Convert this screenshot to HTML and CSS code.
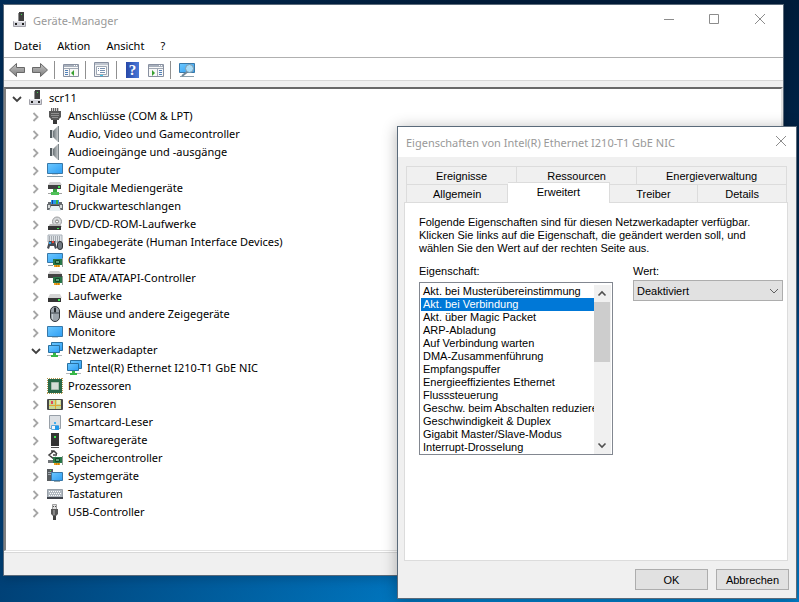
FILE: index.html
```
<!DOCTYPE html>
<html lang="de">
<head>
  <meta charset="UTF-8">
  <meta name="viewport" content="width=device-width, initial-scale=1.0">
  <title>Geräte-Manager</title>
  <link rel="stylesheet" href="styles.css">
</head>
<body>
  <!-- Icon sprites -->
  <svg class="sprites" aria-hidden="true">
    <defs>
      <linearGradient id="screen" x1="0" y1="0" x2="1" y2="1">
        <stop offset="0" stop-color="#6cc8ff"/>
        <stop offset="1" stop-color="#2e9ef4"/>
      </linearGradient>
      <linearGradient id="metal" x1="0" y1="0" x2="1" y2="0">
        <stop offset="0" stop-color="#6c7478"/>
        <stop offset="1" stop-color="#d4d8da"/>
      </linearGradient>
      <linearGradient id="arrow" x1="0" y1="0" x2="0" y2="1">
        <stop offset="0" stop-color="#c4c4c4"/>
        <stop offset="1" stop-color="#7c7c7c"/>
      </linearGradient>
    </defs>
    <symbol id="i-host" viewBox="0 0 16 16">
      <path d="M7 0h5v9H7z" fill="#404040"/><path d="M6 1h1v8H6z" fill="#909090"/><path d="M9 2h1v1H9z" fill="#40d850"/>
      <path d="M1.500 9.500h12v5h-12z" fill="#d4d5dc" stroke="#a0a0a8"/><path d="M2 9h11v1H2z" fill="#f0f0f4"/>
      <path d="M3 11h2v2H3zM10 11h2v2h-2z" fill="#202020"/>
    </symbol>
    <symbol id="i-port" viewBox="0 0 16 16">
      <path d="M4 0h8v4H4z" fill="#d0d0d0"/><path d="M4.500 0v4M6.500 0v4M8.500 0v4M10.500 0v4" stroke="#606060"/>
      <path d="M2 3h12v6l-2 2v1H4v-1l-2-2z" fill="#585858"/><path d="M4 5.500h8M4 7.500h8M5 9.500h6" stroke="#909090"/>
      <path d="M6 12h4v4H6z" fill="#383838"/>
    </symbol>
    <symbol id="i-speaker" viewBox="0 0 16 16">
      <path d="M3 4h3v8H3z" fill="#545c60"/><path d="M6 5l5-5h1v16h-1l-5-5z" fill="url(#metal)"/>
      <path d="M5.500 4v8" stroke="#c8ccce"/><path d="M11.500 0v16" stroke="#7c8488"/>
    </symbol>
    <symbol id="i-computer" viewBox="0 0 16 16">
      <path d="M.5 1.500h15v10H.5z" fill="url(#screen)" stroke="#3878a8"/>
      <path d="M5 12h6v1H5z" fill="#d0d8dc"/><path d="M0 14h16v1H0z" fill="#8ca0ac"/>
    </symbol>
    <symbol id="i-media" viewBox="0 0 16 16">
      <path d="M3 2h10l2 3H1z" fill="#d0d0d0"/><path d="M1 5h13v4H1z" fill="#404040"/><path d="M11 6h2v2h-2z" fill="#40e850"/>
      <path d="M6 9h4v4H6z" fill="#38a840"/><path d="M4 12h8v3H4z" fill="#50c058"/><path d="M1 13h3v1H1zM12 13h3v1h-3z" fill="#a0a0a0"/>
    </symbol>
    <symbol id="i-printer" viewBox="0 0 16 16">
      <path d="M4 2h8v5H4z" fill="#2898e8"/><path d="M9 2h2v4H9z" fill="#38b040"/><path d="M5 2h1v4H5z" fill="#183c9c"/>
      <path d="M1 4h3v2h8V4h3v2h1v6H0V6h1z" fill="#686c70"/>
      <path d="M1 7h2v3H1zM13 7h2v3h-2z" fill="#d8dcdc"/><path d="M4 8h8l2 5H2z" fill="#e8eff2"/><path d="M4 7.500h8" stroke="#404448"/>
    </symbol>
    <symbol id="i-disc" viewBox="0 0 16 16">
      <circle cx="10" cy="5.500" r="4.500" fill="#d8dadc" stroke="#9a9c9e"/><circle cx="10" cy="5.500" r="1.500" fill="#fff" stroke="#808080"/>
      <path d="M3 8h10l2 3H1z" fill="#b8b8b8"/><path d="M1 10h13v4H1z" fill="#343434"/><path d="M10 12h2v1h-2z" fill="#40e850"/>
    </symbol>
    <symbol id="i-hid" viewBox="0 0 16 16">
      <path d="M1 1h14v7H1z" fill="#e0e4e8" stroke="#a8b0b8"/><path d="M2 3h12M2 5h12M2 7h12" stroke="#687078" stroke-dasharray="1 1"/>
      <path d="M0 14l2-7h6l2 7-2 1-1-3H3l-1 3z" fill="#484c54"/><path d="M2 8h2v2H2z" fill="#30a0e8"/><path d="M5 7h2v2H5z" fill="#e84838"/>
      <rect x="10.500" y="7.500" width="5" height="8" rx="2.500" fill="#707880" stroke="#303438"/>
    </symbol>
    <symbol id="i-board" viewBox="0 0 16 16">
      <path d="M6 7h9v6H6z" fill="#287848"/><path d="M15.500 6v9" stroke="#909c94"/><path d="M8.500 8.500h4v3h-4z" fill="#60a078" stroke="#104828"/>
      <path d="M7 13h6v2H7z" fill="#f0a020"/><path d="M9.500 13v2M11.500 13v2" stroke="#c88010"/>
    </symbol>
    <symbol id="i-gpu" viewBox="0 0 16 16">
      <path d="M.5 1.500h15v9H.5z" fill="url(#screen)" stroke="#3878a8"/><path d="M1 13h5v1H1z" fill="#909ca4"/>
      <use href="#i-board"/>
    </symbol>
    <symbol id="i-ide" viewBox="0 0 16 16">
      <path d="M3 1h9l3 3H1z" fill="#d0d0d0"/><path d="M1 4h14v4H1z" fill="#444"/><use href="#i-board"/>
    </symbol>
    <symbol id="i-drive" viewBox="0 0 16 16">
      <path d="M3 6h10l2 4H1z" fill="#d4d4d4"/><path d="M1 10h13v4H1z" fill="#343434"/><path d="M11 11h2v2h-2z" fill="#40e850"/>
    </symbol>
    <symbol id="i-mouse" viewBox="0 0 16 16">
      <rect x="3.500" y=".5" width="9" height="15" rx="4.500" fill="#9ca4ac" stroke="#303438"/>
      <path d="M5 8h1v5H5z" fill="#c8d0d4"/><path d="M8 1v6M4 7h8" stroke="#404850"/><path d="M7 2h2v4H7z" fill="#282c30"/>
    </symbol>
    <symbol id="i-monitor" viewBox="0 0 16 16">
      <path d="M.5 2.500h15v10H.5z" fill="url(#screen)" stroke="#3878a8"/><path d="M5 13h6v1H5z" fill="#c4ccd0"/>
    </symbol>
    <symbol id="i-net" viewBox="0 0 16 16">
      <path d="M4.500.5h11v8h-11z" fill="url(#screen)" stroke="#2870a0"/><path d="M1.500 3.500h11v7h-11z" fill="url(#screen)" stroke="#2870a0"/>
      <path d="M0 13h15v1H0z" fill="#b4b8bc"/><path d="M6 11h3v2h2v2H4v-2h2z" fill="#38b848"/>
    </symbol>
    <symbol id="i-cpu" viewBox="0 0 16 16">
      <path d="M0 .5h16M0 15.500h16M.5 0v16M15.500 0v16" stroke="#b89850" stroke-dasharray="1 1"/>
      <path d="M1 1h14v14H1z" fill="#286848"/><path d="M4.500 4.500h7v7h-7z" fill="#d4dcd8" stroke="#a8bcb0"/>
    </symbol>
    <symbol id="i-sensor" viewBox="0 0 16 16">
      <rect y="3" width="16" height="11" rx="1" fill="#484848"/><path d="M2 4h12v9H2z" fill="#c8d898"/>
      <path d="M2 9.500h12M8.500 4v9" stroke="#e0a830"/><path d="M4 5h2v3H4z" fill="#e04858"/><path d="M10 4h3v4h-3z" fill="#e8ecb8"/>
    </symbol>
    <symbol id="i-card" viewBox="0 0 16 16">
      <path d="M2.500 1.500h11v13h-11z" fill="#dce0e4" stroke="#98a0a8"/><path d="M7 8h2v2H7z" fill="#40b0f0"/>
      <path d="M4.500 11.500h7v4h-7z" fill="#f4f8fc" stroke="#60a8d8"/><path d="M8 12h4v4H8z" fill="#2098e8"/>
    </symbol>
    <symbol id="i-software" viewBox="0 0 16 16">
      <path d="M4 1h8v13H4z" fill="#343434"/><path d="M7 4h2v2H7z" fill="#40e850"/><path d="M4 15h8v1H4z" fill="#505050"/>
    </symbol>
    <symbol id="i-storage" viewBox="0 0 16 16">
      <path d="M7 1L2 5l5 4 2-2M4 1h3l3 3M6 5h4" fill="none" stroke="#404040" stroke-width="1.500"/><path d="M1 10h5v3H1z" fill="#707478"/>
      <use href="#i-board"/>
    </symbol>
    <symbol id="i-system" viewBox="0 0 16 16">
      <path d="M0 1h6v12H0z" fill="#585c60"/><path d="M1 4.500h4M1 6.500h3" stroke="#a0a8b0"/><path d="M3 2h1v1H3z" fill="#40e850"/>
      <path d="M4.500 4.500h11v8h-11z" fill="url(#screen)" stroke="#3878a8"/><path d="M7 13h6v1H7z" fill="#98a8b0"/>
    </symbol>
    <symbol id="i-keyboard" viewBox="0 0 16 16">
      <path d="M.5 3.500h15v8H.5z" fill="#b0b8c0" stroke="#98a0a8"/>
      <path d="M2 5.500h12M3 7.500h11M2 9.500h12" stroke="#fff" stroke-dasharray="1 1"/>
      <path d="M0 11h16v2H0z" fill="#40444c"/>
    </symbol>
    <symbol id="i-usb" viewBox="0 0 16 16">
      <path d="M5.500.5h4v5h-4z" fill="#e0e0e0" stroke="#a0a0a0"/><path d="M6 2h1v1H6zM8 2h1v1H8z" fill="#505050"/>
      <path d="M4 5h7v5l-2 2v1H6v-1l-2-2z" fill="#585858"/><path d="M6 6h2v5H6z" fill="#888"/><path d="M6 12h3v4H6z" fill="#404040"/>
    </symbol>
    <symbol id="i-right" viewBox="0 0 16 16"><path d="M5.500 5l4 4-4 4" fill="none" stroke="#a6a6a6" stroke-width="1.800"/></symbol>
    <symbol id="i-down" viewBox="0 0 16 16"><path d="M4 7l4 4 4-4" fill="none" stroke="#404040" stroke-width="1.800"/></symbol>
    <symbol id="i-close" viewBox="0 0 16 16"><path d="M3 2l10 10M13 2L3 12" fill="none" stroke="#8c8c8c" stroke-width="1"/></symbol>
  </svg>

  <main class="desktop">
    <section class="window manager">
      <header class="titlebar">
        <svg class="icon"><use href="#i-host"/></svg>
        <h1>Geräte-Manager</h1>
        <div class="caption">
          <button aria-label="Minimieren"><svg class="icon"><path d="M4 7.500h10" stroke="#8c8c8c"/></svg></button>
          <button aria-label="Maximieren"><svg class="icon"><path d="M3.500 2.500h9v9h-9z" fill="none" stroke="#8c8c8c"/></svg></button>
          <button aria-label="Schließen"><svg class="icon"><use href="#i-close"/></svg></button>
        </div>
      </header>
      <nav class="menubar">
        <button>Datei</button>
        <button>Aktion</button>
        <button>Ansicht</button>
        <button>?</button>
      </nav>
      <div class="toolbar">
        <button aria-label="Zurück"><svg class="icon"><path d="M.5 8l7-6.500v4h8v5h-8v4z" fill="url(#arrow)" stroke="#686868"/></svg></button>
        <button aria-label="Vorwärts"><svg class="icon"><path d="M15.500 8l-7-6.500v4h-8v5h8v4z" fill="url(#arrow)" stroke="#686868"/></svg></button>
        <span class="separator"></span>
        <button aria-label="Konsolenstruktur"><svg class="icon">
          <path d="M.5 2.500h15v12H.5z" fill="#f8f8f8" stroke="#8890a0"/><path d="M1 3h14v2H1z" fill="#a8b0bc"/><path d="M11 3h1v1h-1zM13 3h1v1h-1z" fill="#fff"/><path d="M1 6.500h14M6.500 7v7" stroke="#a0a8b4"/>
          <path d="M2 8.500h3M2 10.500h3M2 12.500h3" stroke="#5080b8"/><path d="M11 8v6l-3-3z" fill="#38a030"/></svg></button>
        <span class="separator"></span>
        <button aria-label="Eigenschaften"><svg class="icon">
          <path d="M.5.500h14v14H.5z" fill="#f0f2f4" stroke="#8890a0"/><path d="M1 1h13v2H1z" fill="#c0c6d0"/><path d="M2.500 4.500h10v8h-10z" fill="#fff" stroke="#a0a8b4"/>
          <path d="M4 6.500h1M6 6.500h5M4 8.500h1M6 8.500h5M6 10.500h5" stroke="#7890b0"/><path d="M6 13h3v1H6z" fill="#38c8f0"/></svg></button>
        <span class="separator"></span>
        <button class="help" aria-label="Hilfe"><b>?</b></button>
        <button aria-label="Aktionsbereich"><svg class="icon">
          <path d="M.5 2.500h15v12H.5z" fill="#f8f8f8" stroke="#8890a0"/><path d="M1 3h14v2H1z" fill="#a8b0bc"/><path d="M11 3h1v1h-1zM13 3h1v1h-1z" fill="#fff"/><path d="M1 6.500h14M9.500 7v7" stroke="#a0a8b4"/>
          <path d="M11 8.500h3M11 10.500h3M11 12.500h3" stroke="#5080b8"/><path d="M4 8v6l3-3z" fill="#38a030"/></svg></button>
        <span class="separator"></span>
        <button aria-label="Nach geänderter Hardware suchen"><svg class="icon">
          <path d="M.5 1.500h15v9H.5z" fill="url(#screen)" stroke="#3878a8"/><path d="M1 14.500h14" stroke="#8ca0ac"/>
          <circle cx="10.500" cy="6.500" r="4" fill="#a8dcf8" stroke="#8098a8"/><path d="M8 10l-5 4" stroke="#708898" stroke-width="2"/></svg></button>
      </div>

      <div class="tree">
        <ul>
          <li>
            <div class="node"><button aria-label="Reduzieren"><svg class="icon"><use href="#i-down"/></svg></button><svg class="icon"><use href="#i-host"/></svg><span>scr11</span></div>
            <ul>
              <li class="node"><button aria-label="Erweitern"><svg class="icon"><use href="#i-right"/></svg></button><svg class="icon"><use href="#i-port"/></svg><span>Anschlüsse (COM &amp; LPT)</span></li>
              <li class="node"><button aria-label="Erweitern"><svg class="icon"><use href="#i-right"/></svg></button><svg class="icon"><use href="#i-speaker"/></svg><span>Audio, Video und Gamecontroller</span></li>
              <li class="node"><button aria-label="Erweitern"><svg class="icon"><use href="#i-right"/></svg></button><svg class="icon"><use href="#i-speaker"/></svg><span>Audioeingänge und -ausgänge</span></li>
              <li class="node"><button aria-label="Erweitern"><svg class="icon"><use href="#i-right"/></svg></button><svg class="icon"><use href="#i-computer"/></svg><span>Computer</span></li>
              <li class="node"><button aria-label="Erweitern"><svg class="icon"><use href="#i-right"/></svg></button><svg class="icon"><use href="#i-media"/></svg><span>Digitale Mediengeräte</span></li>
              <li class="node"><button aria-label="Erweitern"><svg class="icon"><use href="#i-right"/></svg></button><svg class="icon"><use href="#i-printer"/></svg><span>Druckwarteschlangen</span></li>
              <li class="node"><button aria-label="Erweitern"><svg class="icon"><use href="#i-right"/></svg></button><svg class="icon"><use href="#i-disc"/></svg><span>DVD/CD-ROM-Laufwerke</span></li>
              <li class="node"><button aria-label="Erweitern"><svg class="icon"><use href="#i-right"/></svg></button><svg class="icon"><use href="#i-hid"/></svg><span>Eingabegeräte (Human Interface Devices)</span></li>
              <li class="node"><button aria-label="Erweitern"><svg class="icon"><use href="#i-right"/></svg></button><svg class="icon"><use href="#i-gpu"/></svg><span>Grafikkarte</span></li>
              <li class="node"><button aria-label="Erweitern"><svg class="icon"><use href="#i-right"/></svg></button><svg class="icon"><use href="#i-ide"/></svg><span>IDE ATA/ATAPI-Controller</span></li>
              <li class="node"><button aria-label="Erweitern"><svg class="icon"><use href="#i-right"/></svg></button><svg class="icon"><use href="#i-drive"/></svg><span>Laufwerke</span></li>
              <li class="node"><button aria-label="Erweitern"><svg class="icon"><use href="#i-right"/></svg></button><svg class="icon"><use href="#i-mouse"/></svg><span>Mäuse und andere Zeigegeräte</span></li>
              <li class="node"><button aria-label="Erweitern"><svg class="icon"><use href="#i-right"/></svg></button><svg class="icon"><use href="#i-monitor"/></svg><span>Monitore</span></li>
              <li>
                <div class="node"><button aria-label="Reduzieren"><svg class="icon"><use href="#i-down"/></svg></button><svg class="icon"><use href="#i-net"/></svg><span>Netzwerkadapter</span></div>
                <ul>
                  <li class="node leaf"><svg class="icon"><use href="#i-net"/></svg><span>Intel(R) Ethernet I210-T1 GbE NIC</span></li>
                </ul>
              </li>
              <li class="node"><button aria-label="Erweitern"><svg class="icon"><use href="#i-right"/></svg></button><svg class="icon"><use href="#i-cpu"/></svg><span>Prozessoren</span></li>
              <li class="node"><button aria-label="Erweitern"><svg class="icon"><use href="#i-right"/></svg></button><svg class="icon"><use href="#i-sensor"/></svg><span>Sensoren</span></li>
              <li class="node"><button aria-label="Erweitern"><svg class="icon"><use href="#i-right"/></svg></button><svg class="icon"><use href="#i-card"/></svg><span>Smartcard-Leser</span></li>
              <li class="node"><button aria-label="Erweitern"><svg class="icon"><use href="#i-right"/></svg></button><svg class="icon"><use href="#i-software"/></svg><span>Softwaregeräte</span></li>
              <li class="node"><button aria-label="Erweitern"><svg class="icon"><use href="#i-right"/></svg></button><svg class="icon"><use href="#i-storage"/></svg><span>Speichercontroller</span></li>
              <li class="node"><button aria-label="Erweitern"><svg class="icon"><use href="#i-right"/></svg></button><svg class="icon"><use href="#i-system"/></svg><span>Systemgeräte</span></li>
              <li class="node"><button aria-label="Erweitern"><svg class="icon"><use href="#i-right"/></svg></button><svg class="icon"><use href="#i-keyboard"/></svg><span>Tastaturen</span></li>
              <li class="node"><button aria-label="Erweitern"><svg class="icon"><use href="#i-right"/></svg></button><svg class="icon"><use href="#i-usb"/></svg><span>USB-Controller</span></li>
            </ul>
          </li>
        </ul>
      </div>
      <footer class="statusbar"></footer>
    </section>

    <section class="window dialog">
      <header class="titlebar">
        <h2>Eigenschaften von Intel(R) Ethernet I210-T1 GbE NIC</h2>
        <div class="caption">
          <button aria-label="Schließen"><svg class="icon"><use href="#i-close"/></svg></button>
        </div>
      </header>

      <div class="tabs">
        <div class="tab-row back">
          <button>Ereignisse</button>
          <button>Ressourcen</button>
          <button>Energieverwaltung</button>
        </div>
        <div class="tab-row front">
          <button>Allgemein</button>
          <button class="active">Erweitert</button>
          <button>Treiber</button>
          <button>Details</button>
        </div>
      </div>

      <div class="page">
        <p>Folgende Eigenschaften sind für diesen Netzwerkadapter verfügbar.<br>Klicken Sie links auf die Eigenschaft, die geändert werden soll, und<br>wählen Sie den Wert auf der rechten Seite aus.</p>
        <div class="fields">
          <div class="field property">
            <label for="property">Eigenschaft:</label>
            <div class="listbox">
              <select id="property" size="13">
                <option>Akt. bei Musterübereinstimmung</option>
                <option selected>Akt. bei Verbindung</option>
                <option>Akt. über Magic Packet</option>
                <option>ARP-Abladung</option>
                <option>Auf Verbindung warten</option>
                <option>DMA-Zusammenführung</option>
                <option>Empfangspuffer</option>
                <option>Energieeffizientes Ethernet</option>
                <option>Flusssteuerung</option>
                <option>Geschw. beim Abschalten reduzieren</option>
                <option>Geschwindigkeit &amp; Duplex</option>
                <option>Gigabit Master/Slave-Modus</option>
                <option>Interrupt-Drosselung</option>
              </select>
              <div class="scrollbar">
                <button aria-label="Nach oben"><svg viewBox="0 0 16 16"><path d="M4.500 10L8 6.500l3.500 3.500" fill="none" stroke="#505050" stroke-width="1.600"/></svg></button>
                <span class="thumb"></span>
                <button aria-label="Nach unten"><svg viewBox="0 0 16 16"><path d="M4.500 6L8 9.500 11.500 6" fill="none" stroke="#505050" stroke-width="1.600"/></svg></button>
              </div>
            </div>
          </div>
          <div class="field value">
            <label for="value">Wert:</label>
            <div class="combo">
              <select id="value"><option>Deaktiviert</option></select>
              <svg viewBox="0 0 16 16"><path d="M4 6l4 4 4-4" fill="none" stroke="#606060"/></svg>
            </div>
          </div>
        </div>
      </div>

      <footer class="actions">
        <button>OK</button>
        <button>Abbrechen</button>
      </footer>
    </section>
  </main>
</body>
</html>
```

FILE: styles.css
```
* {
  box-sizing: border-box;
}

body {
  margin: 0;
  font-family: "Noto Sans", "Open Sans", sans-serif;
  font-size: 11px;
  color: #000;
}

button, select {
  margin: 0;
  padding: 0;
  border: none;
  border-radius: 0;
  background: none;
  font: inherit;
  color: inherit;
}

h1, h2, p, ul {
  margin: 0;
  padding: 0;
  font-size: inherit;
  font-weight: normal;
}

ul {
  list-style: none;
}

.sprites {
  position: absolute;
  width: 0;
  height: 0;
}

.icon {
  display: block;
  flex: none;
  width: 16px;
  height: 16px;
}

.desktop {
  position: relative;
  height: 100vh;
  min-height: 600px;
  overflow: hidden;
  background:
    linear-gradient(90deg, rgba(0, 50, 98, 0.8), rgba(0, 80, 160, 0) 60%),
    linear-gradient(#001c3a, #002850 40%, #0058a4 60%, #0068bc 80%, #0080cc);
}

.window {
  position: absolute;
  display: flex;
  flex-direction: column;
  background: #f0f0f0;
  border: 1px solid #5a6a7a;
}

.manager {
  top: 4px;
  right: 15px;
  bottom: 26px;
  left: 3px;
  box-shadow: 0 2px 10px rgba(0, 0, 0, 0.2);
}

.dialog {
  top: 126px;
  right: 2px;
  bottom: 3px;
  left: 397px;
  box-shadow: 0 2px 14px rgba(0, 0, 0, 0.3);
  font-family: "Liberation Sans", Arial, sans-serif;
  font-size: 11px;
  line-height: 13px;
}

/* Title bars */
.titlebar {
  display: flex;
  align-items: center;
  height: 30px;
  padding-left: 8px;
  background: #fff;
  color: #999;
}

.titlebar h1 {
  margin-left: 5px;
}

.titlebar h2 {
  font-family: "Noto Sans", "Open Sans", sans-serif;
}

.caption {
  display: flex;
  margin-left: auto;
}

.caption button {
  display: grid;
  place-items: center;
  width: 46px;
  height: 30px;
}

.dialog .caption button {
  width: 30px;
}

/* Menu and toolbar */
.menubar {
  display: flex;
  gap: 16px;
  height: 23px;
  padding: 0 10px 1px;
  background: #fff;
  border-bottom: 1px solid #b0b0b0;
}

.toolbar {
  display: flex;
  align-items: center;
  height: 23px;
  padding: 2px 0 0 1px;
  background: #fff;
  border-bottom: 1px solid #d8d8d8;
}

.toolbar button {
  padding: 0 3px 0 4px;
}

.toolbar .help b {
  display: block;
  width: 13px;
  height: 16px;
  margin: 0 2px 0 1px;
  background: linear-gradient(90deg, #2848a8, #4878d8);
  color: #fff;
  font-family: "Liberation Serif", serif;
  font-size: 15px;
  line-height: 16px;
}

.separator {
  width: 8px;
  height: 18px;
  background: linear-gradient(#909090, #909090) 3px 0 / 1px 100% no-repeat;
}

/* Device tree */
.tree {
  flex: 1;
  margin-top: 6px;
  overflow: hidden;
  background: #fff;
  border: 1px solid #e3e3e3;
  border-width: 2px 2px 1px;
  border-top-color: #696969;
  border-left-color: #808080;
}

.tree ul ul {
  padding-left: 19px;
}

.node {
  display: flex;
  align-items: center;
  height: 18px;
  white-space: nowrap;
}

.node button {
  width: 22px;
  padding-left: 3px;
}

.node span {
  margin-left: 5px;
  line-height: 14px;
  padding-bottom: 1px;
}

.leaf {
  padding-left: 22px;
}

.statusbar {
  height: 24px;
  border-top: 1px solid #fff;
  box-shadow: inset 0 1px #d8d8d8;
}

/* Property tabs */
.tabs {
  padding: 9px 9px 0 8px;
}

.tab-row {
  display: flex;
}

.tab-row button {
  height: 18px;
  padding-top: 1px;
  border: 1px solid #dcdcdc;
  border-width: 1px 1px 0 0;
}

.tab-row button:first-child {
  border-left-width: 1px;
}

.back button {
  flex: 12;
}

.back button:first-child {
  flex: 11;
}

.back button:last-child {
  flex: 15;
}

.front button {
  flex: 7;
}

.front button:first-child, .front .active {
  flex: 8;
}

.front .active {
  position: relative;
  height: 21px;
  margin: -2px 0 -1px;
  padding: 0 0 2px;
  background: #fff;
}

.page {
  flex: 1;
  margin: 0 8px 0 6px;
  padding: 13px 4px 0 14px;
  background: #fff;
  border: 1px solid #dcdcdc;
}

.fields {
  display: flex;
  gap: 20px;
  margin-top: 10px;
}

.field label {
  display: block;
  margin-bottom: 4px;
}

.property {
  flex: 194;
  min-width: 0;
}

.value {
  flex: 150;
}

.listbox {
  display: flex;
  padding: 2px 1px 0;
  border: 1px solid #828790;
}

.listbox select {
  flex: 1;
  min-width: 0;
  height: 169px;
  padding: 0;
  overflow: hidden;
  outline: none;
}

.listbox option {
  height: 13px;
  min-height: 13px;
  padding: 0 2px;
  line-height: 13px;
}

.listbox option:checked {
  background: linear-gradient(#0078d7, #0078d7);
  color: #fff;
}

.scrollbar {
  display: flex;
  flex-direction: column;
  width: 17px;
  background: #f0f0f0;
}

.scrollbar button, .scrollbar svg {
  display: block;
  width: 16px;
  height: 17px;
}

.scrollbar button:last-child {
  margin-top: auto;
}

.thumb {
  height: 60px;
  margin-right: 1px;
  background: #cdcdcd;
}

.combo {
  position: relative;
}

.value label {
  margin-bottom: 2px;
}

.combo select {
  width: 100%;
  height: 21px;
  padding: 1px 0 0 3px;
  appearance: none;
  background: #e1e1e1;
  border: 1px solid #adadad;
}

.combo svg {
  position: absolute;
  top: 3px;
  right: 1px;
  width: 16px;
  height: 16px;
  pointer-events: none;
}

.actions {
  display: flex;
  justify-content: flex-end;
  gap: 8px;
  padding: 8px 7px;
}

.actions button {
  width: 73px;
  height: 21px;
  padding-top: 1px;
  background: #e1e1e1;
  border: 1px solid #adadad;
}
```
